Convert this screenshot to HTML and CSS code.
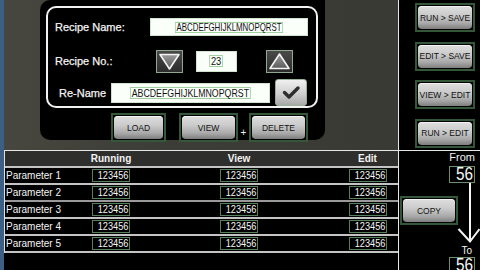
FILE: index.html
```html
<!DOCTYPE html>
<html>
<head>
<meta charset="utf-8">
<link rel="stylesheet" href="styles.css">
</head>
<body>
<div class="screen">
  <div class="main">
    <div class="top">
      <div class="panel">
        <div class="recipe-box">
          <div class="row row-name">
            <span class="label lbl-name">Recipe Name:</span>
            <div class="field field-name"><span class="field-text t-name">ABCDEFGHIJKLMNOPQRST</span></div>
          </div>
          <div class="row row-no">
            <span class="label lbl-no">Recipe No.:</span>
            <div class="tri-btn">
              <svg width="25" height="21" viewBox="0 0 25 21"><defs><linearGradient id="g1" x1="0" y1="0" x2="0" y2="1"><stop offset="0" stop-color="#9a9a9a"/><stop offset="1" stop-color="#5c5c5c"/></linearGradient></defs><polygon points="3,3.5 22,3.5 12.5,18" fill="url(#g1)" stroke="#f4f4f4" stroke-width="1.6" stroke-linejoin="round"/></svg>
            </div>
            <div class="field field-no"><span class="field-text t-no">23</span></div>
            <div class="tri-btn up">
              <svg width="25" height="21" viewBox="0 0 25 21"><defs><linearGradient id="g2" x1="0" y1="0" x2="0" y2="1"><stop offset="0" stop-color="#9a9a9a"/><stop offset="1" stop-color="#5c5c5c"/></linearGradient></defs><polygon points="3,17.5 22,17.5 12.5,3" fill="url(#g2)" stroke="#f4f4f4" stroke-width="1.6" stroke-linejoin="round"/></svg>
            </div>
          </div>
          <div class="row row-rename">
            <span class="label lbl-rename">Re-Name</span>
            <div class="field field-rename"><span class="field-text t-rename">ABCDEFGHIJKLMNOPQRST</span></div>
            <div class="check-btn">
              <svg width="30" height="25" viewBox="0 0 30 25"><polyline points="8.5,12.5 13,17 22,8" fill="none" stroke="#2e2e2e" stroke-width="3.4" stroke-linecap="round" stroke-linejoin="round"/></svg>
            </div>
          </div>
        </div>
        <div class="actions">
          <div class="frame f-load"><div class="btn">LOAD</div></div>
          <div class="frame f-view"><div class="btn">VIEW</div></div>
          <span class="plus">+</span>
          <div class="frame f-delete"><div class="btn">DELETE</div></div>
        </div>
      </div>
    </div>
    <div class="hline"></div>
    <div class="table">
      <div class="thead">
        <span></span><span class="th">Running</span><span></span><span class="th">View</span><span></span><span class="th">Edit</span>
      </div>
      <div class="trow"><span class="pname">Parameter 1</span><span class="val"><span class="num">123456</span></span><span></span><span class="val"><span class="num">123456</span></span><span></span><span class="val"><span class="num">123456</span></span></div>
      <div class="trow"><span class="pname">Parameter 2</span><span class="val"><span class="num">123456</span></span><span></span><span class="val"><span class="num">123456</span></span><span></span><span class="val"><span class="num">123456</span></span></div>
      <div class="trow r3"><span class="pname">Parameter 3</span><span class="val"><span class="num">123456</span></span><span></span><span class="val"><span class="num">123456</span></span><span></span><span class="val"><span class="num">123456</span></span></div>
      <div class="trow"><span class="pname">Parameter 4</span><span class="val"><span class="num">123456</span></span><span></span><span class="val"><span class="num">123456</span></span><span></span><span class="val"><span class="num">123456</span></span></div>
      <div class="trow last"><span class="pname">Parameter 5</span><span class="val"><span class="num">123456</span></span><span></span><span class="val"><span class="num">123456</span></span><span></span><span class="val"><span class="num">123456</span></span></div>
    </div>
  </div>
  <div class="vline"></div>
  <div class="side">
    <div class="side-btns">
      <div class="frame f-side"><div class="btn">RUN &gt; SAVE</div></div>
      <div class="frame f-side"><div class="btn">EDIT &gt; SAVE</div></div>
      <div class="frame f-side"><div class="btn">VIEW &gt; EDIT</div></div>
      <div class="frame f-side"><div class="btn">RUN &gt; EDIT</div></div>
    </div>
    <div class="hline"></div>
    <div class="copy-area">
      <div class="frame f-copy"><div class="btn">COPY</div></div>
      <div class="stack">
        <div class="from">From</div>
        <div class="num-box"><span class="big">56</span></div>
        <svg class="arrow" width="31" height="62" viewBox="0 0 31 62"><line x1="21" y1="0" x2="21" y2="58" stroke="#f4f4f4" stroke-width="2"/><polyline points="9.5,46 21,58.5 30.5,46" fill="none" stroke="#f4f4f4" stroke-width="2"/></svg>
        <div class="to">To</div>
        <div class="num-box"><span class="big">56</span></div>
      </div>
    </div>
  </div>
</div>
</body>
</html>
```
FILE: styles.css
```css
* { box-sizing: border-box; }
html, body { margin: 0; padding: 0; }
body {
  width: 480px;
  height: 270px;
  overflow: hidden;
  background: #000;
  font-family: "Liberation Sans", Arial, sans-serif;
  color: #fff;
}
.screen {
  display: grid;
  grid-template-columns: 398px 1px 81px;
  height: 270px;
}
.main {
  border-left: 4px solid #3e5f84;
  display: flex;
  flex-direction: column;
  background: #000;
}
.top {
  height: 150px;
  flex-shrink: 0;
  padding-left: 36px;
  background: linear-gradient(90deg, #47473f 0%, #3d3d38 40%, #3a3a35 100%);
}
.panel {
  width: 285px;
  height: 140px;
  background: #000;
  border-radius: 10px 0 10px 10px;
  padding: 6px 0 0 6px;
}
.recipe-box {
  width: 272px;
  height: 102px;
  border: 2px solid #f2f2f2;
  border-radius: 10px;
  display: flex;
  flex-direction: column;
}
.row { display: flex; align-items: center; }
.row-name { margin-top: 10px; height: 18px; }
.row-no { margin-top: 13px; height: 24px; }
.row-rename { margin-top: 6px; height: 27px; }
.label {
  font-size: 11px;
  color: #f4f4f4;
  white-space: nowrap;
  -webkit-text-stroke: 0.25px #f4f4f4;
}
.lbl-name { width: 102px; padding-left: 7px; }
.lbl-no { width: 108px; padding-left: 7px; }
.lbl-rename { width: 63px; padding-left: 11px; }
.field {
  background: #fbfffa;
  border: 1px solid #cfe3cf;
  display: flex;
  align-items: center;
  justify-content: center;
}
.field-name { width: 158px; height: 18px; }
.field-no { width: 41px; height: 21px; margin-left: 13px; }
.field-rename { width: 159px; height: 20px; }
.field-text {
  color: #111;
  border: 1px solid #9fcf9f;
  line-height: 9px;
  padding: 0 1px;
  white-space: nowrap;
  flex-shrink: 0;
}
.t-name { font-size: 10.5px; transform: scaleX(0.75); }
.t-rename { font-size: 11px; line-height: 10px; transform: scaleX(0.8); }
.t-no { font-size: 11px; line-height: 10px; padding: 0 1px; transform: scaleX(0.85); }
.tri-btn {
  width: 27px;
  height: 23px;
  border: 1px solid #8fa88f;
  background: linear-gradient(#4a4a4a, #2c2c2c);
  display: flex;
  align-items: center;
  justify-content: center;
}
.tri-btn.up { margin-left: 29px; }
.check-btn {
  width: 32px;
  height: 27px;
  margin-left: 5px;
  border: 1px solid #98b098;
  border-radius: 3px;
  background: linear-gradient(#f0f0f0, #cfcfcf 55%, #a9a9a9);
  display: flex;
  align-items: center;
  justify-content: center;
}
.actions {
  margin-top: 5px;
  padding-left: 65px;
  display: flex;
  height: 29px;
}
.frame {
  border: 2px solid #34573a;
  padding: 1px;
  background: #000;
  height: 29px;
  flex-shrink: 0;
}
.btn {
  height: 100%;
  border-radius: 4px;
  background: linear-gradient(#dedede 0%, #cbcbcb 40%, #a9a9a9 75%, #7e7e7e 100%);
  box-shadow: inset 0 1px 0 #f2f2f2;
  color: #111;
  font-size: 8.5px;
  display: flex;
  align-items: center;
  justify-content: center;
  white-space: nowrap;
}
.f-load { width: 55px; }
.f-view { width: 59px; margin-left: 13px; }
.f-delete { width: 59px; }
.plus {
  width: 11px;
  font-size: 10px;
  text-align: center;
  align-self: flex-end;
  margin-bottom: 4px;
  color: #eee;
}
.hline { height: 1px; background: #e6e6e6; flex-shrink: 0; }
.table {
  border-left: 1px solid #e0e0e0;
  display: flex;
  flex-direction: column;
}
.thead {
  height: 15px;
  background: #2e2e2c;
  display: grid;
  grid-template-columns: 76px 60px 68px 60px 69px 59px;
  align-items: center;
}
.th {
  font-size: 10px;
  font-weight: bold;
  text-align: center;
  color: #f2f2f2;
  line-height: 15px;
}
.trow {
  height: 17px;
  border-top: 2px solid #c4c4c4;
  display: grid;
  grid-template-columns: 87px 38px 90px 38px 91px 38px;
  align-items: center;
}
.trow.r3 { border-top-color: #9a9a9a; }
.trow.last { height: 19px; border-bottom: 2px solid #c4c4c4; }
.pname {
  font-size: 10px;
  padding-left: 1px;
  color: #f4f4f4;
  white-space: nowrap;
}
.val {
  height: 13px;
  border: 1px solid #56805a;
  display: flex;
  justify-content: flex-end;
  align-items: center;
  padding-right: 1px;
}
.num {
  font-size: 11.5px;
  line-height: 11px;
  color: #f6f6f6;
  transform: scaleX(0.8);
  transform-origin: right center;
}
.vline { background: #e6e6e6; }
.side { display: flex; flex-direction: column; background: #000; }
.side-btns {
  height: 150px;
  flex-shrink: 0;
  padding: 3px 0 0 16px;
  display: flex;
  flex-direction: column;
  gap: 9.5px;
}
.f-side { width: 60px; }
.copy-area { display: flex; height: 119px; flex-shrink: 0; }
.f-copy { width: 58px; margin: 45px 0 0 1px; }
.stack {
  width: 31px;
  margin-left: -9px;
  display: flex;
  flex-direction: column;
}
.stack > * { flex-shrink: 0; }
.from {
  font-size: 11px;
  line-height: 13px;
  height: 13px;
  text-align: right;
  padding-right: 5px;
  color: #f2f2f2;
}
.num-box {
  width: 26px;
  height: 17px;
  margin-top: 2px;
  border: 1px solid #6c8f6c;
  display: flex;
  justify-content: flex-end;
  align-items: center;
  padding-right: 1px;
}
.big {
  font-size: 18px;
  line-height: 15px;
  color: #f6f6f6;
  transform: scaleX(0.85);
  transform-origin: right center;
}
.arrow { display: block; }
.to {
  font-size: 10px;
  line-height: 12px;
  height: 12px;
  text-align: right;
  padding-right: 8px;
  color: #f2f2f2;
}
.to + .num-box { margin-top: 0; }
```
